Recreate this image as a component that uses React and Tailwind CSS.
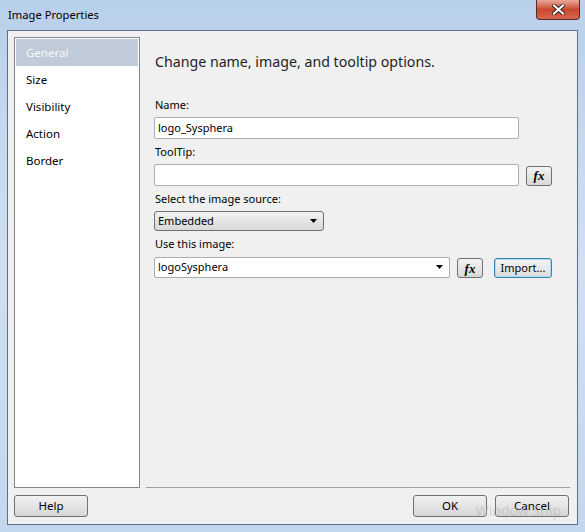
import React from 'react';

const font = { fontFamily: '"Noto Sans", "Open Sans", sans-serif' };

function Fx() {
  return (
    <button className="w-[26px] h-[20px] rounded-[3px] border border-[#707070] bg-gradient-to-b from-[#f4f4f4] to-[#d8d8d8] flex items-center justify-center shrink-0">
      <span className="text-[13px] font-bold italic leading-none text-black" style={{ fontFamily: '"Liberation Serif", serif' }}>
        fx
      </span>
    </button>
  );
}

function Caret() {
  return (
    <svg width="8" height="4" viewBox="0 0 8 4" className="shrink-0">
      <path d="M0 0 H7 L3.5 4 Z" fill="#000" />
    </svg>
  );
}

function Btn({ children, className = '' }) {
  return (
    <button className={`h-[22px] rounded-[3px] border border-[#707070] bg-gradient-to-b from-[#f2f2f2] to-[#d6d6d6] text-[11.5px] text-black ${className}`}>
      {children}
    </button>
  );
}

const navItems = ['General', 'Size', 'Visibility', 'Action', 'Border'];

export default function App() {
  return (
    <div className="w-[585px] h-[532px] bg-gradient-to-b from-[#b9d0ea] via-[#cfe0f3] to-[#c2d7ee] flex flex-col px-[7px] pb-[7px] text-black" style={font}>
      {/* title bar */}
      <div className="h-[30px] flex items-start justify-between">
        <span className="text-[11.2px] leading-none mt-[9px] ml-[1px]">Image Properties</span>
        <div className="w-[44px] h-[20px] -mr-[2px] rounded-b-[4px] border border-t-0 border-[#5a2b24] bg-gradient-to-b from-[#e9a898] via-[#c8492f] to-[#d6644c] flex items-center justify-center">
          <svg width="13" height="11" viewBox="0 0 13 11">
            <path d="M2 1.5 L11 9.5 M11 1.5 L2 9.5" stroke="#3a1a16" strokeWidth="4" strokeLinecap="square" />
            <path d="M2 1.5 L11 9.5 M11 1.5 L2 9.5" stroke="#fff" strokeWidth="2.2" strokeLinecap="square" />
          </svg>
        </div>
      </div>

      {/* client area */}
      <div className="flex-1 border border-[#5d6f86] bg-[#f0f0f0] flex flex-col">
        <div className="flex h-[457px] pl-[6px] pt-[6px] pr-[7px]">
          <div className="w-[126px] h-[451px] bg-white border border-[#828790] p-px">
            {navItems.map((item, i) => (
              <div
                key={item}
                className={`h-[27px] pl-[10px] flex items-center text-[11.5px] ${i === 0 ? 'bg-[#c0cbd9] text-[#f8f8f8]' : 'text-black'}`}
              >
                {item}
              </div>
            ))}
          </div>

          <div className="flex-1 ml-[6px] border-b border-[#a0a0a0] pl-[9px] flex flex-col">
            <div className="text-[14.2px] text-[#1e1e1e] mt-[15px] leading-[20px]">Change name, image, and tooltip options.</div>

            <div className="text-[11px] mt-[25px] leading-[16px]">Name:</div>
            <div className="mt-[4px] w-[365px] h-[22px] bg-white border border-[#abadb3] rounded-[2px] text-[11px] pl-[3px] flex items-center -ml-px">
              logo_Sysphera
            </div>

            <div className="text-[11px] mt-[5px] leading-[16px]">ToolTip:</div>
            <div className="mt-[4px] flex items-center -ml-px">
              <div className="w-[365px] h-[22px] bg-white border border-[#abadb3] rounded-[2px]" />
              <div className="ml-[7px] mt-[1px]">
                <Fx />
              </div>
            </div>

            <div className="text-[11px] mt-[5px] leading-[16px]">Select the image source:</div>
            <div className="mt-[4px] -ml-px w-[170px] h-[20px] rounded-[3px] border border-[#707070] bg-gradient-to-b from-[#f2f2f2] to-[#d8d8d8] flex items-center justify-between pl-[3px] pr-[5px] text-[11px]">
              <span>Embedded</span>
              <Caret />
            </div>

            <div className="text-[11px] mt-[5px] leading-[16px]">Use this image:</div>
            <div className="mt-[4px] flex items-center -ml-px">
              <div className="w-[296px] h-[21px] bg-white border border-[#abadb3] rounded-[2px] flex items-center justify-between pl-[3px] pr-[5px] text-[11px]">
                <span>logoSysphera</span>
                <Caret />
              </div>
              <div className="ml-[7px] mt-[2px]">
                <Fx />
              </div>
              <button className="ml-[11px] mt-[2px] w-[58px] h-[20px] rounded-[3px] border border-[#3c7fb1] shadow-[inset_0_0_0_1px_#a6e0fb] bg-gradient-to-b from-[#f4f4f4] to-[#dcdcdc] text-[11px]">
                Import...
              </button>
            </div>
          </div>
        </div>

        <div className="flex items-center justify-between pl-[6px] pr-[8px] mt-[7px]">
          <Btn className="w-[74px]">Help</Btn>
          <div className="flex gap-[8px] relative">
            <Btn className="w-[74px]">OK</Btn>
            <Btn className="w-[74px]">Cancel</Btn>
            <span className="absolute right-[8px] top-[9px] text-[14px] text-[#b8b8b8]/60 leading-none pointer-events-none">Window Snip</span>
          </div>
        </div>
      </div>
    </div>
  );
}
